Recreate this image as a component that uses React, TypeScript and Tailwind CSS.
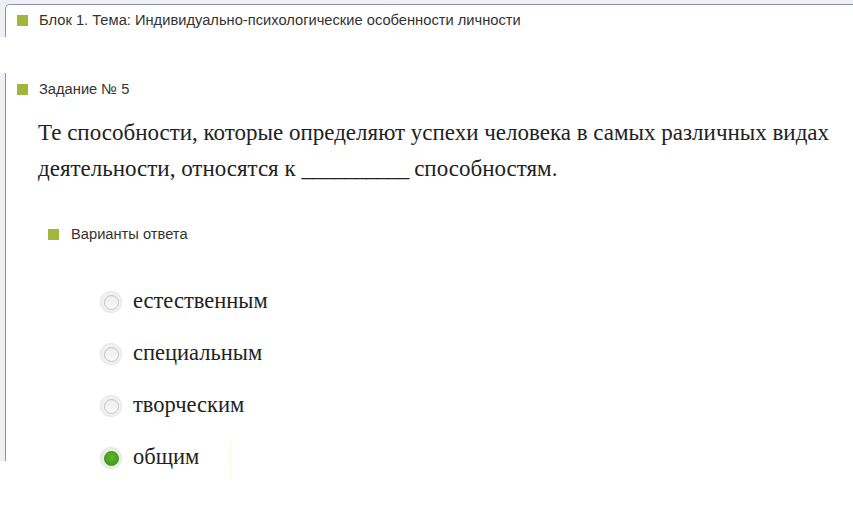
import React from "react";

const options = [
  { label: "естественным", checked: false },
  { label: "специальным", checked: false },
  { label: "творческим", checked: false },
  { label: "общим", checked: true },
];

function Marker() {
  return <span className="inline-block w-[11px] h-[11px] bg-[#9fb83c] shrink-0" />;
}

function Radio({ checked }: { checked: boolean }) {
  if (checked) {
    return (
      <span className="flex items-center justify-center w-[20px] h-[20px] rounded-full bg-[#e9efe4] shadow-[0_0_1px_1px_#e2e6de]">
        <span className="w-[15px] h-[15px] rounded-full bg-[radial-gradient(circle_at_50%_40%,#5cb82a,#3f9414)] border border-[#3d8f15]" />
      </span>
    );
  }
  return (
    <span className="flex items-center justify-center w-[20px] h-[20px] rounded-full bg-[#f1f1f1] shadow-[0_0_1px_1px_#e6e6e6]">
      <span className="w-[15px] h-[15px] rounded-full border border-[#c4c4c4] bg-[linear-gradient(#ececec,#fafafa)]" />
    </span>
  );
}

export default function App() {
  return (
    <div className="relative w-[853px] h-[521px] bg-white overflow-hidden font-['Liberation_Sans',Arial,sans-serif] text-[#333]">
      {/* block header */}
      <div className="bg-[#eef0f6] pt-[4px] pl-[5px]">
        <div className="h-[33px] bg-white border-t border-l border-[#8a92ad] rounded-tl-[5px] flex items-center gap-[11px] pl-[11px] pb-[1px]">
          <Marker />
          <span className="text-[14.7px] leading-none">
            Блок 1. Тема: Индивидуально-психологические особенности личности
          </span>
        </div>
      </div>

      <div className="h-[36px]" />

      {/* task panel */}
      <div className="flex h-[388px]">
        <div className="w-[5px] bg-[#eef0f6]" />
        <div className="flex-1 border-l border-[#8a92ad] bg-white pl-[11px]">
          <div className="flex items-center gap-[11px] pt-[4px] h-[28px]">
            <Marker />
            <span className="text-[14.7px] leading-none">Задание № 5</span>
          </div>

          <p className="mt-[14px] ml-[21px] font-['Liberation_Serif','Times_New_Roman',serif] text-[23px] leading-[36px] text-[#222]">
            Те способности, которые определяют успехи человека в самых различных видах
            <br />
            деятельности, относятся к <span className="tracking-[-0.8px]">__________</span> способностям.
          </p>

          <div className="flex items-center gap-[12px] ml-[31px] mt-[40px] h-[14px]">
            <Marker />
            <span className="text-[14.7px] leading-none">Варианты ответа</span>
          </div>

          <div className="ml-[84px] mt-[51px] flex flex-col gap-[32px]">
            {options.map((o) => (
              <div key={o.label} className="flex items-center gap-[12px] h-[20px]">
                <Radio checked={o.checked} />
                <span className="font-['Liberation_Serif','Times_New_Roman',serif] text-[22.5px] leading-none text-[#222] relative -top-[1px]">
                  {o.label}
                </span>
                {o.checked && <span className="ml-[19px] w-px h-[38px] bg-[#fbf8d8]" />}
              </div>
            ))}
          </div>
        </div>
      </div>
    </div>
  );
}
